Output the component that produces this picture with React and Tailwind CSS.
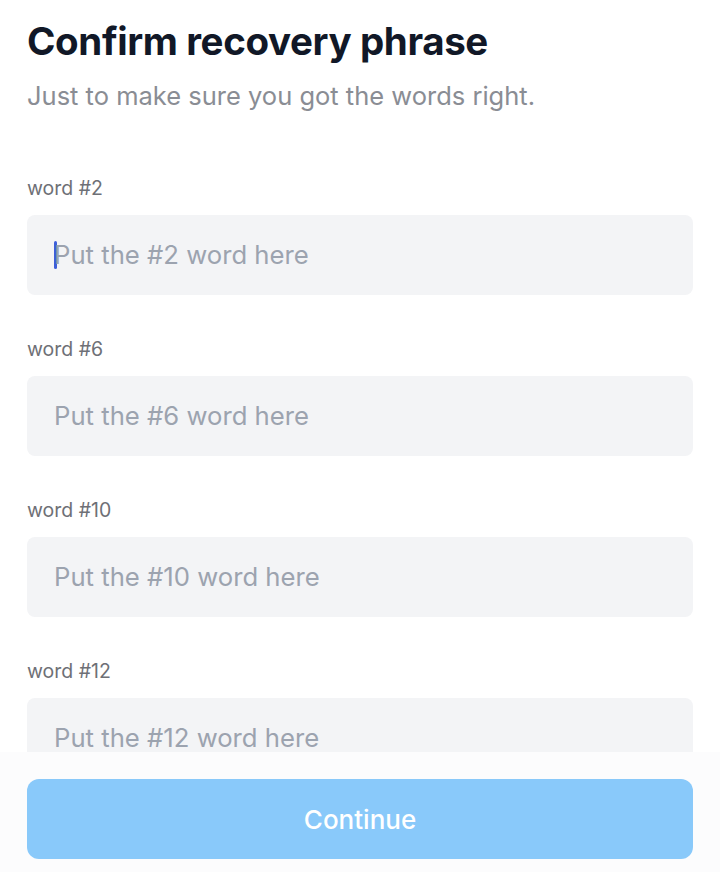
const fields = [2, 6, 10, 12];

export default function App() {
  return (
    <div className="flex h-[872px] w-[720px] flex-col bg-white font-['Inter',sans-serif]">
      <div className="h-[752px] overflow-hidden px-[27px] pt-[18px]">
        <h1 className="text-[38.5px] font-bold leading-[46px] tracking-[-0.01em] text-[#111827]">
          Confirm recovery phrase
        </h1>
        <p className="mt-[16px] text-[25.5px] leading-[32px] text-[#8a8d94]">
          Just to make sure you got the words right.
        </p>
        <div className="mt-[64px] flex flex-col gap-[42px]">
          {fields.map((n, i) => (
            <div key={n} className="flex flex-col">
              <label className="text-[19.5px] leading-[24px] text-[#6e7076]">word #{n}</label>
              <div className="mt-[15px] flex h-[80px] items-center rounded-[8px] bg-[#f3f4f6] px-[27px]">
                {i === 0 && <span className="mr-[-3px] h-[28px] w-[3px] rounded-full bg-[#3d5fd9]" />}
                <span className="text-[25.7px] text-[#9ca3af]">Put the #{n} word here</span>
              </div>
            </div>
          ))}
        </div>
      </div>
      <div className="flex flex-1 flex-col bg-[#fcfcfd] px-[27px] pt-[27px]">
        <button className="flex h-[80px] w-full items-center justify-center rounded-[12px] bg-[#89c9fa] text-[26px] font-medium text-white">
          Continue
        </button>
      </div>
    </div>
  );
}
